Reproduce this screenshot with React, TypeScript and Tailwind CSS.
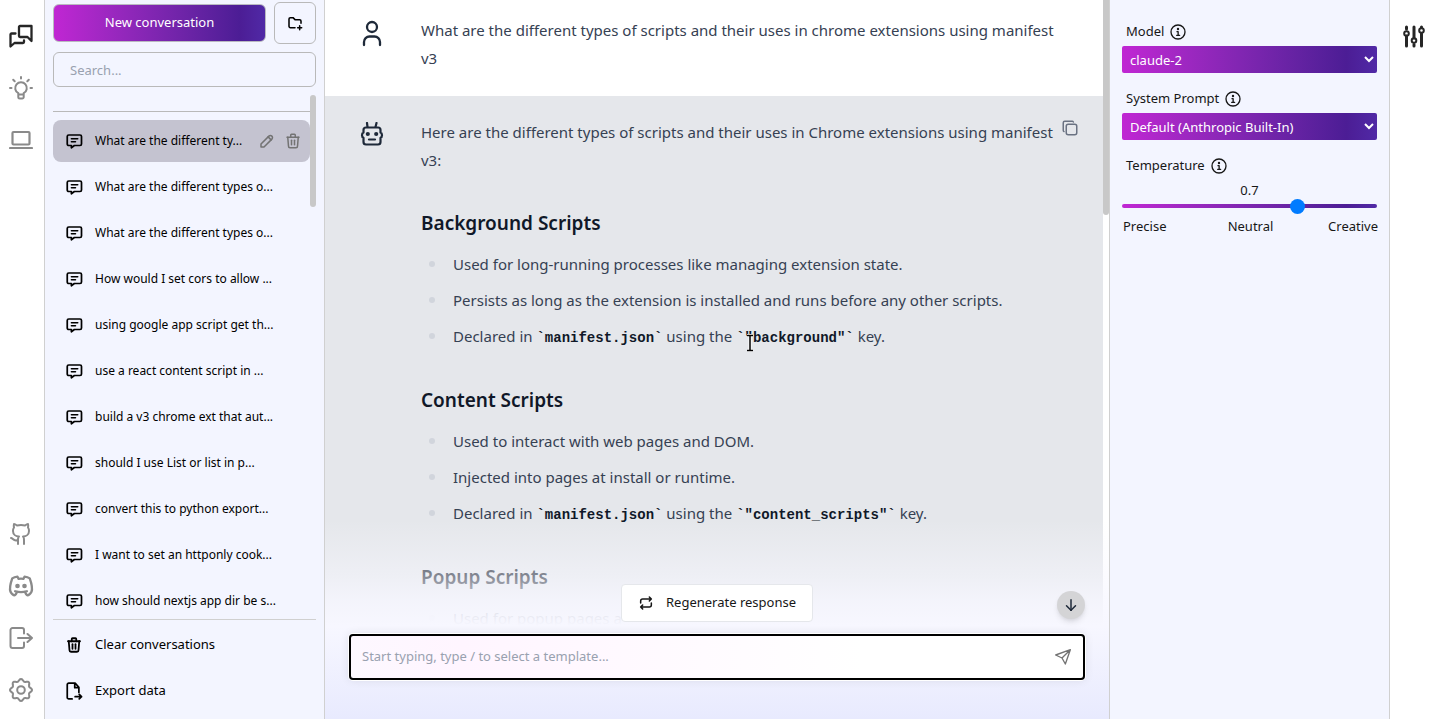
import React, { useState } from "react";
import {
  TbTrash,
  TbPencil,
  TbFolderPlus,
  TbCopy,
  TbRepeat,
  TbArrowDown,
  TbBrandDiscord,
} from "react-icons/tb";
import { LuGithub } from "react-icons/lu";

type IconProps = { children: React.ReactNode; className?: string; strokeWidth?: number };

function Icon({ children, className = "size-6", strokeWidth = 2 }: IconProps) {
  return (
    <svg
      viewBox="0 0 24 24"
      className={className}
      fill="none"
      stroke="currentColor"
      strokeWidth={strokeWidth}
      strokeLinecap="round"
      strokeLinejoin="round"
      aria-hidden="true"
    >
      {children}
    </svg>
  );
}

const gearPath =
  Array.from({ length: 96 }, (_, i) => {
    const a = (i / 96) * Math.PI * 2;
    const r = 9.9 + 1.1 * Math.cos(8 * a);
    return `${i ? "L" : "M"}${(12 + r * Math.sin(a)).toFixed(2)} ${(12 - r * Math.cos(a)).toFixed(2)}`;
  }).join("") + "Z";

const MessageIcon = () => (
  <Icon className="size-[18px] shrink-0" strokeWidth={2.3}>
    <path d="M5 4h15a2 2 0 0 1 2 2v10a2 2 0 0 1-2 2h-7.500L8.500 21v-3H5a2 2 0 0 1-2-2V6a2 2 0 0 1 2-2z" />
    <path d="M8.500 9h8.500M8.500 13h5.500" strokeWidth="2" />
  </Icon>
);

const ChatsIcon = () => (
  <Icon strokeWidth={2.3}>
    <path d="M11 2h11.500v15l-4-4H11a1 1 0 0 1-1-1V3a1 1 0 0 1 1-1z" />
    <path d="M6.500 9.500H2.500a1 1 0 0 0-1 1V22.500l4-3.500H14a1 1 0 0 0 1-1v-1.500" />
  </Icon>
);

const BulbIcon = () => (
  <Icon>
    <path d="M9.300 17.200a5.800 5.800 0 1 1 5.400 0V21a1.500 1.500 0 0 1-1.500 1.500h-2.400A1.500 1.500 0 0 1 9.300 21zM9.300 18.500h5.400" />
    <path d="M12 1v1.500M4.200 3.800l1.500 1.500M19.800 3.800l-1.500 1.500M1 12h1.500M21.500 12H23" />
  </Icon>
);

const LaptopIcon = () => (
  <Icon strokeWidth={2.2}>
    <rect x="3.500" y="4" width="17" height="12.500" rx="1" />
    <path d="M1 20h22" />
  </Icon>
);

const SignOutIcon = () => (
  <Icon>
    <path d="M15 7.500V4a2 2 0 0 0-2-2H3.500a2 2 0 0 0-2 2v16a2 2 0 0 0 2 2H13a2 2 0 0 0 2-2v-3.500" />
    <path d="M9 12h14M18.500 8l4.500 4-4.500 4" />
  </Icon>
);

const GearIcon = () => (
  <Icon>
    <path d={gearPath} />
    <circle cx="12" cy="12" r="3.800" />
  </Icon>
);

const UserIcon = () => (
  <svg viewBox="0 0 24 30" className="h-[30px] w-6" fill="none" stroke="currentColor" strokeWidth="2.300" strokeLinecap="round" aria-hidden="true">
    <circle cx="12" cy="8" r="5" />
    <path d="M4 26v-3a5.500 5.500 0 0 1 5.500-5.500h5A5.500 5.500 0 0 1 20 23v3" />
  </svg>
);

const RobotIcon = () => (
  <Icon strokeWidth={2.2}>
    <path d="M7.500 5 7 1M15.500 5 16.500 1" />
    <path d="M6 5.500h12a2.500 2.500 0 0 1 2.500 2.500v2.500c2 .8 2 4.500 0 5.200V20a2.500 2.500 0 0 1-2.500 2.500H6A2.500 2.500 0 0 1 3.500 20v-4.300c-2-.7-2-4.400 0-5.200V8A2.500 2.500 0 0 1 6 5.500z" />
    <path d="M9 17.500h6" />
    <circle cx="7.800" cy="12" r="1" fill="currentColor" />
    <circle cx="16.200" cy="12" r="1" fill="currentColor" />
  </Icon>
);

const InfoIcon = () => (
  <Icon className="size-4" strokeWidth={2}>
    <circle cx="12" cy="12" r="10.500" />
    <circle cx="12" cy="7.500" r=".8" fill="currentColor" />
    <path d="M10.500 11.500h1.700v5.500M10 17h4.500" />
  </Icon>
);

const SlidersIcon = () => (
  <Icon strokeWidth={3}>
    <path d="M4.500 3v2M4.500 12v10M12 3v11M12 20.500V22M19.500 3v.5M19.500 9.500V22" />
    <circle cx="4.500" cy="9.500" r="2.300" strokeWidth="2" />
    <circle cx="12" cy="16.500" r="2.300" strokeWidth="2" />
    <circle cx="19.500" cy="6.500" r="2.300" strokeWidth="2" />
  </Icon>
);

const ExportIcon = () => (
  <Icon className="size-[18px]" strokeWidth={2.300}>
    <path d="M9.500 22.500H5a2 2 0 0 1-2-2v-17a2 2 0 0 1 2-2h8.500L18.500 7v7M13 2v5.500h5.500" />
    <path d="M13.500 19.500h8.500M19 16.500l3 3-3 3" />
  </Icon>
);

const SendIcon = () => (
  <Icon className="size-4">
    <path d="M23 1 15.500 22.500 10.500 13.500 1 9zM23 1 10.500 13.500" />
  </Icon>
);

const gradient = "bg-linear-to-r from-[#c026d3] via-[#4c1d95] via-88% to-[#5029a6]";

const conversations = [
  "What are the different types o...",
  "What are the different types o...",
  "How would I set cors to allow ...",
  "using google app script get th...",
  "use a react content script in ...",
  "build a v3 chrome ext that aut...",
  "should I use List or list in p...",
  "convert this to python export...",
  "I want to set an httponly cook...",
  "how should nextjs app dir be s...",
];

function RailButton({ label, children, active }: { label: string; children: React.ReactNode; active?: boolean }) {
  return (
    <button aria-label={label} className={active ? "text-neutral-800" : "text-[#8a8a8a]"}>
      {children}
    </button>
  );
}

function Code({ children }: { children: React.ReactNode }) {
  return <code className="font-['Liberation_Mono',monospace] text-sm font-bold text-gray-900">{children}</code>;
}

function Section({ title, items }: { title: string; items: React.ReactNode[] }) {
  return (
    <section className="pt-[33px]">
      <h3 className="mb-[11px] text-[19px] leading-8 font-semibold text-gray-900">{title}</h3>
      <ul className="flex flex-col gap-2 pb-px">
        {items.map((item, i) => (
          <li key={i} className="flex h-7 items-center">
            <span className="mr-[18px] ml-2 size-1.5 shrink-0 rounded-full bg-gray-300" />
            <span>{item}</span>
          </li>
        ))}
      </ul>
    </section>
  );
}

function FieldLabel({ htmlFor, children }: { htmlFor: string; children: React.ReactNode }) {
  return (
    <div className="flex h-7 items-center gap-1.5 px-1">
      <label htmlFor={htmlFor}>{children}</label>
      <button aria-label={`About ${children}`}>
        <InfoIcon />
      </button>
    </div>
  );
}

export default function App() {
  const [temperature, setTemperature] = useState(0.7);

  return (
    <div className="flex h-screen overflow-hidden bg-white font-['Noto_Sans',sans-serif] text-[13px] text-neutral-900">
      <nav className="flex w-[45px] shrink-0 flex-col items-start justify-between border-r border-[#d0d0d0] pt-6 pb-[17px] pl-[9px]">
        <div className="flex flex-col gap-7">
          <RailButton label="Chat" active><ChatsIcon /></RailButton>
          <RailButton label="Prompts"><BulbIcon /></RailButton>
          <RailButton label="Models"><LaptopIcon /></RailButton>
        </div>
        <div className="flex flex-col gap-7">
          <RailButton label="GitHub"><LuGithub className="size-6" /></RailButton>
          <RailButton label="Discord"><TbBrandDiscord className="-m-0.5 size-7" /></RailButton>
          <RailButton label="Sign out"><SignOutIcon /></RailButton>
          <RailButton label="Settings"><GearIcon /></RailButton>
        </div>
      </nav>

      <aside className="flex w-[280px] shrink-0 flex-col border-r border-[#d0d0d0] bg-[#f3f5ff] px-2 pt-0.5 pb-[7px] text-black">
        <div className="flex items-center gap-2">
          <button className={`h-[38px] flex-1 rounded-md border border-[#b9b9c0] text-white ${gradient}`}>
            New conversation
          </button>
          <button aria-label="New folder" className="flex size-[42px] items-center justify-center rounded-md border border-[#b9b9b9]">
            <TbFolderPlus className="size-4" strokeWidth={2.3} />
          </button>
        </div>
        <input
          aria-label="Search conversations"
          placeholder="Search..."
          className="mt-2 h-[35px] shrink-0 rounded-md border border-[#b9b9b9] px-4 placeholder:text-gray-400"
        />
        <div className="relative mt-2 min-h-0 flex-1 overflow-hidden">
          <div className="mt-4 mr-1.5 border-t border-[#b9b9b9] pt-2">
            <div className="flex h-[42px] items-center rounded-lg bg-[#c4c3d0] pr-2 pl-3">
              <MessageIcon />
              <a href="#current" className="ml-3 flex-1 whitespace-nowrap text-xs">
                What are the different ty...
              </a>
              <button aria-label="Rename" className="text-neutral-500"><TbPencil className="size-[18px]" /></button>
              <button aria-label="Delete" className="ml-2 text-neutral-500"><TbTrash className="size-[18px]" /></button>
            </div>
            {conversations.map((title, i) => (
              <a key={i} href="#conversation" className="mt-1 flex h-[42px] items-center gap-3 px-3 text-xs">
                <MessageIcon />
                {title}
              </a>
            ))}
          </div>
          <div className="absolute top-0 right-0 h-28 w-1.5 rounded-full bg-[#c8c8c8]" />
        </div>
        <div className="flex flex-col gap-1 border-t border-[#d0d0d0] pt-1">
          <button className="flex h-[42px] items-center gap-3 px-3">
            <TbTrash className="size-[18px]" strokeWidth={2.4} />
            Clear conversations
          </button>
          <button className="flex h-[42px] items-center gap-3 px-3">
            <ExportIcon />
            Export data
          </button>
        </div>
      </aside>

      <main className="relative min-w-0 flex-1 overflow-hidden border-r border-[#d0d0d0]">
        <div className="flex h-full flex-col pr-1.5 text-[15px] leading-7 text-gray-700">
          <div className="flex h-24 shrink-0 pt-4 pr-12 pl-[35px]">
            <span className="mt-[3px] mr-[37px] shrink-0 text-gray-800"><UserIcon /></span>
            <p>What are the different types of scripts and their uses in chrome extensions using manifest v3</p>
          </div>
          <div className="flex flex-1 bg-[#e5e7eb] pt-[22px] pr-6 pl-[35px]">
            <span className="mt-1 mr-[37px] shrink-0 text-gray-800"><RobotIcon /></span>
            <article className="min-w-0 flex-1">
              <p>Here are the different types of scripts and their uses in Chrome extensions using manifest v3:</p>
              <Section
                title="Background Scripts"
                items={[
                  "Used for long-running processes like managing extension state.",
                  "Persists as long as the extension is installed and runs before any other scripts.",
                  <>
                    Declared in <Code>`manifest.json`</Code> using the{" "}
                    <span className="relative">
                      <Code>`"background"`</Code>
                      <svg viewBox="0 0 8 18" className="pointer-events-none absolute top-2 left-2.5 h-[18px] w-2" aria-hidden="true">
                        <path d="M1 1.500h6M1 16.500h6M4 1.500v15" stroke="white" strokeWidth="3" />
                        <path d="M1 1.500h6M1 16.500h6M4 1.500v15" stroke="black" strokeWidth="1.500" />
                      </svg>
                    </span>{" "}
                    key.
                  </>,
                ]}
              />
              <Section
                title="Content Scripts"
                items={[
                  "Used to interact with web pages and DOM.",
                  "Injected into pages at install or runtime.",
                  <>
                    Declared in <Code>`manifest.json`</Code> using the <Code>`"content_scripts"`</Code> key.
                  </>,
                ]}
              />
              <Section title="Popup Scripts" items={["Used for popup pages a"]} />
            </article>
            <button aria-label="Copy" className="mt-px ml-1.5 h-4 text-gray-500">
              <TbCopy className="size-[18px]" />
            </button>
          </div>
        </div>
        <div className="absolute top-0 right-0 h-[215px] w-1.5 rounded-b-full bg-[#c8c8c8]" />

        <div className="absolute inset-x-0 bottom-0 bg-[linear-gradient(to_bottom,rgba(247,247,255,0)_0px,rgba(247,247,255,0.5)_56px,rgba(247,247,255,0.8)_80px,#f7f7ff_106px,#e8eafe_199px)] px-6 pt-16 pb-[39px]">
          <div className="relative flex justify-center">
            <button className="flex h-[38px] items-center gap-3 rounded border border-gray-200 bg-white px-4">
              <TbRepeat className="size-4" strokeWidth={2.3} />
              Regenerate response
            </button>
            <button aria-label="Scroll to bottom" className="absolute right-0 bottom-[3px] flex size-7 items-center justify-center rounded-full bg-[#d4d4d6] text-gray-800 shadow-md">
              <TbArrowDown className="size-[18px]" />
            </button>
          </div>
          <div className="mt-3 flex h-[46px] items-center rounded border-2 border-black bg-linear-to-r from-[#fdf8ff] via-[#fff5ff] via-15% to-white to-70% pr-3 pl-[11px] shadow-[0_0_0_1px_white,0_0_10px_rgba(0,0,0,0.1)]">
            <input
              aria-label="Message"
              placeholder="Start typing, type / to select a template..."
              className="min-w-0 flex-1 bg-transparent outline-none placeholder:text-gray-400"
            />
            <button aria-label="Send" className="text-neutral-500"><SendIcon /></button>
          </div>
        </div>
      </main>

      <aside className="flex w-[280px] shrink-0 flex-col border-r border-[#d0d0d0] bg-[#f3f5ff] px-3 pt-[18px]">
        <FieldLabel htmlFor="model">Model</FieldLabel>
        <select id="model" className={`h-[27px] rounded-xs px-1 text-white ${gradient}`}>
          <option>claude-2</option>
        </select>
        <div className="h-3" />
        <FieldLabel htmlFor="prompt">System Prompt</FieldLabel>
        <select id="prompt" className={`h-[27px] rounded-xs px-1 text-white ${gradient}`}>
          <option>Default (Anthropic Built-In)</option>
        </select>
        <div className="h-3" />
        <FieldLabel htmlFor="temperature">Temperature</FieldLabel>
        <output htmlFor="temperature" className="text-center leading-5">{temperature}</output>
        <input
          id="temperature"
          type="range"
          min={0}
          max={1}
          step={0.1}
          value={temperature}
          onChange={(e) => setTemperature(Number(e.target.value))}
          className={`my-1 h-1 appearance-none rounded-full [&::-webkit-slider-thumb]:size-[15px] [&::-webkit-slider-thumb]:appearance-none [&::-webkit-slider-thumb]:rounded-full [&::-webkit-slider-thumb]:bg-[#007bff] ${gradient}`}
        />
        <div className="-mx-px mt-1 grid grid-cols-3 pl-0.5 leading-5">
          <span>Precise</span>
          <span className="text-center">Neutral</span>
          <span className="text-right">Creative</span>
        </div>
      </aside>

      <div className="flex w-[46px] shrink-0 justify-center pt-6 pl-0.5">
        <button aria-label="Model settings" className="h-6 text-neutral-800"><SlidersIcon /></button>
      </div>
    </div>
  );
}
